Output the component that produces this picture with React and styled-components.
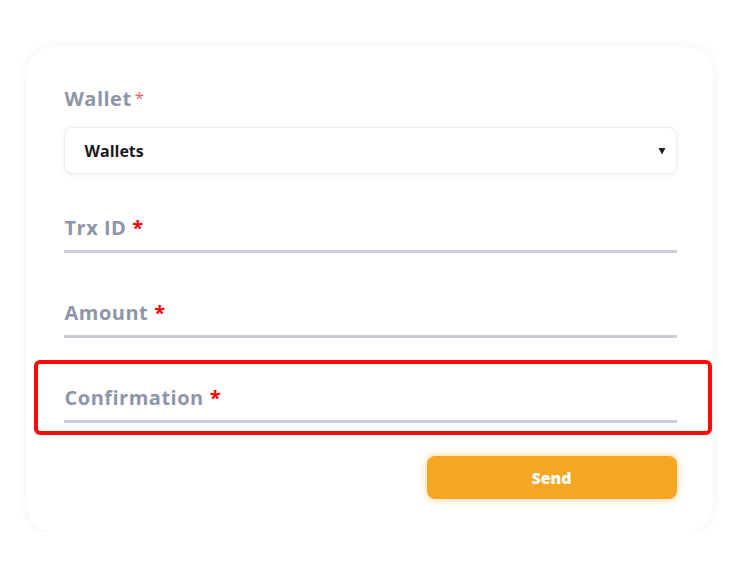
import React from "react";
import styled, { createGlobalStyle } from "styled-components";

const GlobalStyle = createGlobalStyle`
  body {
    margin: 0;
    background: #fff;
    font-family: "Open Sans", "Liberation Sans", sans-serif;
  }
`;

const Card = styled.div`
  width: 686px;
  box-sizing: border-box;
  margin: 47px auto 0;
  padding: 38px 36px 33px 37px;
  background: #fff;
  border-radius: 26px;
  box-shadow: 0 0 12px rgba(0, 0, 0, 0.06);
  display: flex;
  flex-direction: column;
`;

const Label = styled.div`
  height: 27px;
  font-size: 20px;
  line-height: 27px;
  font-weight: 700;
  color: #8d96a8;
  letter-spacing: 0.5px;
  padding-left: 1px;
`;

const Star = styled.span`
  line-height: 1;
  color: ${(p) => (p.soft ? "#ff5c5c" : "#ff0000")};
  font-weight: ${(p) => (p.soft ? 400 : 700)};
  font-size: ${(p) => (p.soft ? "17px" : "inherit")};
  margin-left: ${(p) => (p.soft ? "3px" : "6px")};
  vertical-align: ${(p) => (p.soft ? "2px" : "baseline")};
`;

const SelectBox = styled.div`
  margin-top: 15px;
  height: 47px;
  box-sizing: border-box;
  display: flex;
  align-items: center;
  justify-content: space-between;
  padding: 0 10px 0 20px;
  border: 1px solid #ececec;
  border-radius: 8px;
  box-shadow: 0 1px 5px rgba(0, 0, 0, 0.07);
  font-size: 16px;
  font-weight: 700;
  color: #1b1b1f;
`;

const LineField = styled.div`
  position: relative;
  margin-top: ${(p) => p.gap}px;
  padding-bottom: 9px;
  border-bottom: 3px solid #c8ccd6;

  ${(p) =>
    p.highlighted &&
    `
    &::after {
      content: "";
      position: absolute;
      top: -24px;
      bottom: -15px;
      left: -30px;
      right: -35px;
      border: 4px solid #ff0a0a;
      border-radius: 6px;
      pointer-events: none;
    }
  `}
`;

const Actions = styled.div`
  display: flex;
  justify-content: flex-end;
  margin-top: 33px;
`;

const SendButton = styled.button`
  width: 250px;
  height: 43px;
  border: none;
  border-radius: 8px;
  background: #f5a623;
  box-shadow: 0 0 8px rgba(245, 166, 35, 0.55);
  color: #fff;
  font-family: inherit;
  font-size: 16px;
  font-weight: 800;
  cursor: pointer;
`;

const Caret = () => (
  <svg width="8" height="8" viewBox="0 0 8 8">
    <path d="M0.5 1h7L4 7.5z" fill="#222" />
  </svg>
);

export default function App() {
  return (
    <>
      <GlobalStyle />
      <Card>
        <Label>
          Wallet<Star soft>*</Star>
        </Label>
        <SelectBox>
          <span>Wallets</span>
          <Caret />
        </SelectBox>

        <LineField gap={40}>
          <Label>
            Trx ID<Star>*</Star>
          </Label>
        </LineField>

        <LineField gap={46}>
          <Label>
            Amount<Star>*</Star>
          </Label>
        </LineField>

        <LineField gap={46} highlighted>
          <Label>
            Confirmation<Star>*</Star>
          </Label>
        </LineField>

        <Actions>
          <SendButton type="button">Send</SendButton>
        </Actions>
      </Card>
    </>
  );
}
